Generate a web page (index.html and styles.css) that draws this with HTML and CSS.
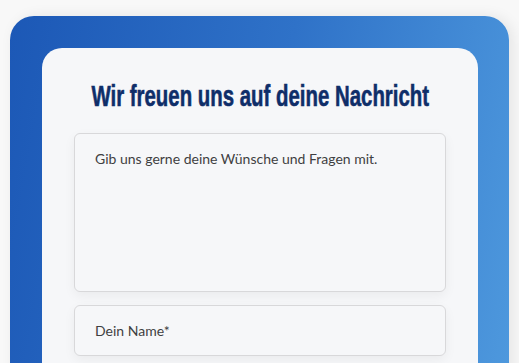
FILE: index.html
```html
<!DOCTYPE html>
<html lang="de">
<head>
	<meta charset="utf-8">
	<title>Kontakt</title>
	<link rel="stylesheet" href="styles.css">
</head>
<body>
	<div class="frame">
		<div class="card">
			<h2 class="title"><span class="title-text">Wir freuen uns auf deine Nachricht</span></h2>
			<form class="form">
				<textarea class="field area" placeholder="Gib uns gerne deine Wünsche und Fragen mit."></textarea>
				<input class="field line" type="text" placeholder="Dein Name*">
			</form>
		</div>
	</div>
</body>
</html>
```

FILE: styles.css
```css
html, body{
	margin:0;
	height:100%;
	overflow:hidden;
}
body{
	background-color:#f8f8f8;
	padding:16px 10px 0;
	font-family:Lato, "Liberation Sans", sans-serif;
}
.frame{
	height:400px;
	border-radius:24px 24px 0 0;
	background:linear-gradient(100deg, #1c58b6 0%, #2f72c8 50%, #4f9ade 100%);
	box-shadow:4px 0 14px rgba(0,0,0,0.08);
	padding:32px 31px 0 32px;
}
.card{
	height:400px;
	background-color:#f6f7f9;
	border-radius:20px 20px 0 0;
	padding:29px 32px 0;
}
.title{
	display:flex;
	justify-content:center;
	margin:0 0 18px;
	white-space:nowrap;
	font-family:"Liberation Sans", Arial, sans-serif;
	font-weight:bold;
	font-size:30px;
	line-height:38px;
	color:#0f2e69;
	-webkit-text-stroke:0.6px #0f2e69;
}
.title-text{
	display:inline-block;
	flex:none;
	transform:scaleX(0.68);
}
.form{
	display:flex;
	flex-direction:column;
	gap:13px;
}
.field{
	display:block;
	width:100%;
	box-sizing:border-box;
	margin:0;
	border:1px solid #d8d8da;
	border-radius:6px;
	background-color:#f6f7f9;
	box-shadow:0 4px 12px rgba(0,0,0,0.05);
	font-family:Lato, "Liberation Sans", sans-serif;
	font-size:14px;
	color:#3f3f42;
	padding:0 20px;
	outline:none;
}
.field::placeholder{
	color:#3f3f42;
	opacity:1;
}
.area{
	height:159px;
	padding-top:15px;
	resize:none;
	line-height:20px;
}
.line{
	height:51px;
}
```
